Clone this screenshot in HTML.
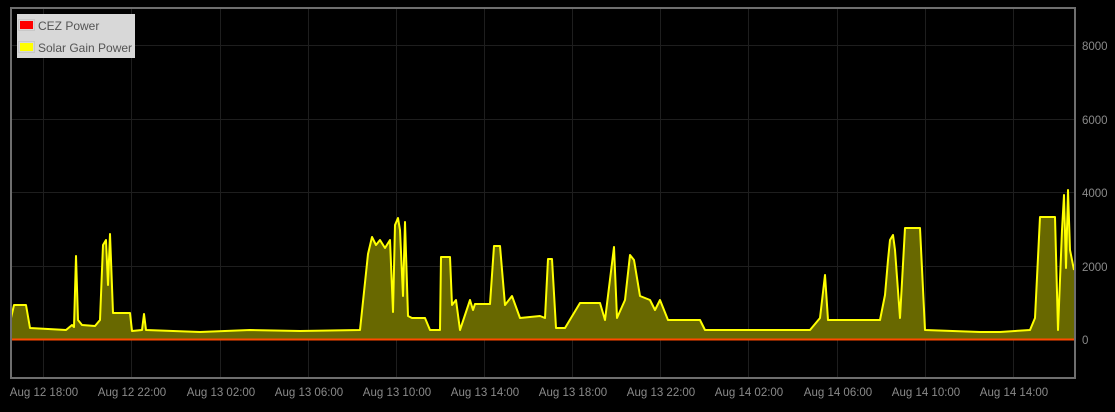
<!DOCTYPE html>
<html><head><style>
html,body{margin:0;padding:0;background:#000;width:1115px;height:412px;overflow:hidden;font-family:"Liberation Sans",sans-serif}
.t{font-size:11.5px;fill:#8a8a8a;font-family:"Liberation Sans",sans-serif}
</style></head><body>
<svg width="1115" height="412" viewBox="0 0 1115 412" xmlns="http://www.w3.org/2000/svg">
<rect width="1115" height="412" fill="#000"/>
<g stroke="#1e1e1e" stroke-width="1">
<line x1="11" y1="45.5" x2="1075" y2="45.5"/>
<line x1="11" y1="119.5" x2="1075" y2="119.5"/>
<line x1="11" y1="192.5" x2="1075" y2="192.5"/>
<line x1="11" y1="266.5" x2="1075" y2="266.5"/>
<line x1="11" y1="339.5" x2="1075" y2="339.5"/>
<line x1="43.5" y1="8" x2="43.5" y2="377"/>
<line x1="131.5" y1="8" x2="131.5" y2="377"/>
<line x1="220.5" y1="8" x2="220.5" y2="377"/>
<line x1="308.5" y1="8" x2="308.5" y2="377"/>
<line x1="396.5" y1="8" x2="396.5" y2="377"/>
<line x1="484.5" y1="8" x2="484.5" y2="377"/>
<line x1="572.5" y1="8" x2="572.5" y2="377"/>
<line x1="660.5" y1="8" x2="660.5" y2="377"/>
<line x1="748.5" y1="8" x2="748.5" y2="377"/>
<line x1="837.5" y1="8" x2="837.5" y2="377"/>
<line x1="925.5" y1="8" x2="925.5" y2="377"/>
<line x1="1013.5" y1="8" x2="1013.5" y2="377"/>
</g>
<polygon fill="#686800" points="11,340 11,318 14,305 26,305 30,328 66,330 72,325 74,327 76,256 78,320 82,325 95,326 100,320 103,245 106,240 108,285 110,234 113,313 118,313 130,313 132,331 142,330 144,314 146,330 200,332 250,330 300,331 360,330 368,254 372,237 376,245 380,240 385,248 390,240 393,312 395,225 398,218 400,230 403,296 405,222 408,316 412,318 425,318 430,330 440,330 441,257 450,257 452,305 456,300 460,330 470,300 473,310 475,304 490,304 494,246 500,246 505,305 512,296 520,318 540,316 545,318 548,259 552,259 556,328 565,328 580,303 600,303 605,320 614,247 617,318 625,300 630,255 634,260 640,296 650,300 655,310 660,300 668,320 700,320 705,330 760,330 810,330 820,318 825,275 828,320 880,320 885,295 888,260 890,240 893,235 895,250 900,318 905,228 920,228 925,330 980,332 1000,332 1030,330 1035,318 1040,217 1055,217 1058,330 1062,230 1064,195 1066,268 1068,190 1070,250 1074,270 1075,340"/>
<polyline fill="none" stroke="#ffff00" stroke-width="2" stroke-linejoin="round" points="11,318 14,305 26,305 30,328 66,330 72,325 74,327 76,256 78,320 82,325 95,326 100,320 103,245 106,240 108,285 110,234 113,313 118,313 130,313 132,331 142,330 144,314 146,330 200,332 250,330 300,331 360,330 368,254 372,237 376,245 380,240 385,248 390,240 393,312 395,225 398,218 400,230 403,296 405,222 408,316 412,318 425,318 430,330 440,330 441,257 450,257 452,305 456,300 460,330 470,300 473,310 475,304 490,304 494,246 500,246 505,305 512,296 520,318 540,316 545,318 548,259 552,259 556,328 565,328 580,303 600,303 605,320 614,247 617,318 625,300 630,255 634,260 640,296 650,300 655,310 660,300 668,320 700,320 705,330 760,330 810,330 820,318 825,275 828,320 880,320 885,295 888,260 890,240 893,235 895,250 900,318 905,228 920,228 925,330 980,332 1000,332 1030,330 1035,318 1040,217 1055,217 1058,330 1062,230 1064,195 1066,268 1068,190 1070,250 1074,270"/>
<line x1="11" y1="339.5" x2="1075" y2="339.5" stroke="#ff4a00" stroke-width="2"/>
<rect x="11" y="8" width="1064" height="370" fill="none" stroke="#6e6e6e" stroke-width="2"/>
<g class="t" text-anchor="start">
<text x="1082" y="50">8000</text>
<text x="1082" y="124">6000</text>
<text x="1082" y="197">4000</text>
<text x="1082" y="271">2000</text>
<text x="1082" y="344">0</text>
</g>
<g class="t" text-anchor="middle">
<text x="44" y="396">Aug 12 18:00</text>
<text x="132" y="396">Aug 12 22:00</text>
<text x="221" y="396">Aug 13 02:00</text>
<text x="309" y="396">Aug 13 06:00</text>
<text x="397" y="396">Aug 13 10:00</text>
<text x="485" y="396">Aug 13 14:00</text>
<text x="573" y="396">Aug 13 18:00</text>
<text x="661" y="396">Aug 13 22:00</text>
<text x="749" y="396">Aug 14 02:00</text>
<text x="838" y="396">Aug 14 06:00</text>
<text x="926" y="396">Aug 14 10:00</text>
<text x="1014" y="396">Aug 14 14:00</text>
</g>
<rect x="17" y="14" width="118" height="44" fill="#d8d8d8"/>
<rect x="18.5" y="19.5" width="16" height="11" fill="none" stroke="#c8c8c8"/>
<rect x="20" y="21" width="13" height="8" fill="#ff0000"/>
<rect x="18.5" y="41.5" width="16" height="11" fill="none" stroke="#c8c8c8"/>
<rect x="20" y="43" width="13" height="8" fill="#ffff00"/>
<text x="38" y="30" font-size="12" fill="#545454" font-family="Liberation Sans, sans-serif">CEZ Power</text>
<text x="38" y="52" font-size="12" fill="#545454" font-family="Liberation Sans, sans-serif">Solar Gain Power</text>
</svg>
</body></html>
